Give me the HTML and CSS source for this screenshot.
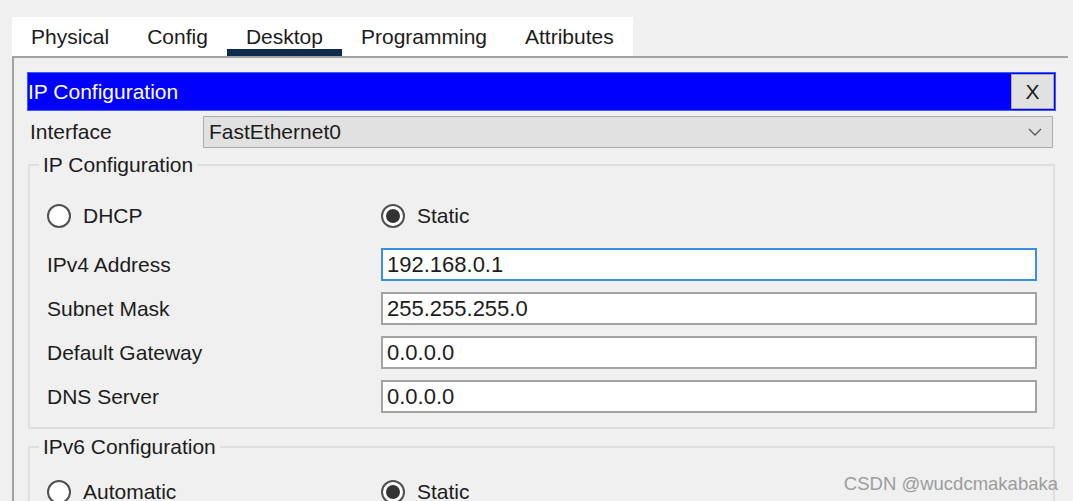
FILE: index.html
```html
<!DOCTYPE html>
<html>
<head>
<meta charset="utf-8">
<link rel="stylesheet" href="styles.css">
</head>
<body>
<div class="page">
  <nav class="tabs">
    <span class="tab">Physical</span>
    <span class="tab">Config</span>
    <span class="tab active">Desktop</span>
    <span class="tab">Programming</span>
    <span class="tab">Attributes</span>
  </nav>
  <section class="panel">
    <div class="titlebar">
      <span class="title">IP Configuration</span>
      <span class="close">X</span>
    </div>
    <div class="iface-row">
      <span class="iface-label">Interface</span>
      <div class="select">
        <span>FastEthernet0</span>
        <svg class="chev" width="14" height="8" viewBox="0 0 14 8"><polyline points="1,1 7,7 13,1" fill="none" stroke="#555" stroke-width="1.3"/></svg>
      </div>
    </div>
    <fieldset class="group first">
      <legend>IP Configuration</legend>
      <div class="grid">
        <label class="opt"><span class="radio"></span>DHCP</label>
        <label class="opt"><span class="radio on"></span>Static</label>
        <span class="lbl">IPv4 Address</span>
        <div class="field focus">192.168.0.1</div>
        <span class="lbl">Subnet Mask</span>
        <div class="field">255.255.255.0</div>
        <span class="lbl">Default Gateway</span>
        <div class="field">0.0.0.0</div>
        <span class="lbl">DNS Server</span>
        <div class="field">0.0.0.0</div>
      </div>
    </fieldset>
    <fieldset class="group second">
      <legend>IPv6 Configuration</legend>
      <div class="grid">
        <label class="opt"><span class="radio"></span>Automatic</label>
        <label class="opt"><span class="radio on"></span>Static</label>
      </div>
    </fieldset>
  </section>
  <div class="watermark">CSDN @wucdcmakabaka</div>
</div>
</body>
</html>
```
FILE: styles.css
```css
html, body {
  margin: 0;
  padding: 0;
  background: #f0f0f0;
  overflow: hidden;
}
body {
  font-family: "Liberation Sans", Arial, sans-serif;
  font-size: 21px;
  color: #1c1c1c;
}
.page {
  position: relative;
  width: 1073px;
  height: 501px;
  overflow: hidden;
}
.tabs {
  display: flex;
  width: fit-content;
  margin: 17px 0 0 12px;
  height: 39px;
  background: #ffffff;
}
.tab {
  padding: 0 19px;
  line-height: 39px;
  height: 39px;
  box-sizing: border-box;
}
.tab.active {
  box-shadow: inset 0 -7px 0 #0e2a4d;
}
.panel {
  margin-left: 12px;
  width: 1056px;
  height: 460px;
  box-sizing: border-box;
  border-top: 2px solid #a3a3a3;
  border-left: 2px solid #a3a3a3;
  padding: 14px 0 0 13px;
}
.titlebar {
  display: flex;
  align-items: center;
  justify-content: space-between;
  width: 1029px;
  height: 39px;
  box-sizing: border-box;
  background: #0000ff;
  border: 1px solid #3a5cff;
  padding: 0 1px 0 0;
}
.title {
  color: #ffffff;
  padding-left: 0;
}
.close {
  width: 43px;
  height: 35px;
  box-sizing: border-box;
  background: #e1e1e1;
  border: 1px solid #adadad;
  display: flex;
  align-items: center;
  justify-content: center;
  color: #1c1c1c;
}
.iface-row {
  display: flex;
  align-items: center;
  margin-top: 5px;
  height: 32px;
}
.iface-label {
  width: 176px;
  padding-left: 3px;
  box-sizing: border-box;
}
.select {
  width: 850px;
  height: 32px;
  box-sizing: border-box;
  background: #e1e1e1;
  border: 1px solid #adadad;
  display: flex;
  align-items: center;
  justify-content: space-between;
  padding: 0 10px 0 5px;
}
.group {
  margin: 6px 0 0 1px;
  width: 1027px;
  box-sizing: border-box;
  border: 2px solid #dedede;
  padding: 27px 16px 14px 17px;
  min-width: 0;
}
.group legend {
  margin-left: -8px;
  padding: 0 4px;
  line-height: 22px;
}
.group.second {
  margin-top: 7px;
  padding-top: 21px;
}
.grid {
  display: grid;
  grid-template-columns: 334px 656px;
  row-gap: 11px;
  align-items: center;
}
.opt {
  display: flex;
  align-items: center;
  height: 26px;
  margin-bottom: 8px;
  gap: 12px;
}
.radio {
  width: 24px;
  height: 24px;
  box-sizing: border-box;
  border: 2px solid #505050;
  border-radius: 50%;
  background: #ffffff;
  display: flex;
  align-items: center;
  justify-content: center;
}
.radio.on::after {
  content: "";
  width: 14px;
  height: 14px;
  border-radius: 50%;
  background: #333333;
}
.field {
  height: 33px;
  box-sizing: border-box;
  background: #ffffff;
  border: 2px solid #a3a3a3;
  padding-left: 4px;
  font-size: 22px;
  line-height: 29px;
}
.field.focus {
  border-color: #3b8fe0;
}
.watermark {
  position: absolute;
  right: 15px;
  bottom: 6px;
  font-size: 18.5px;
  color: #9c9c9c;
}
```
